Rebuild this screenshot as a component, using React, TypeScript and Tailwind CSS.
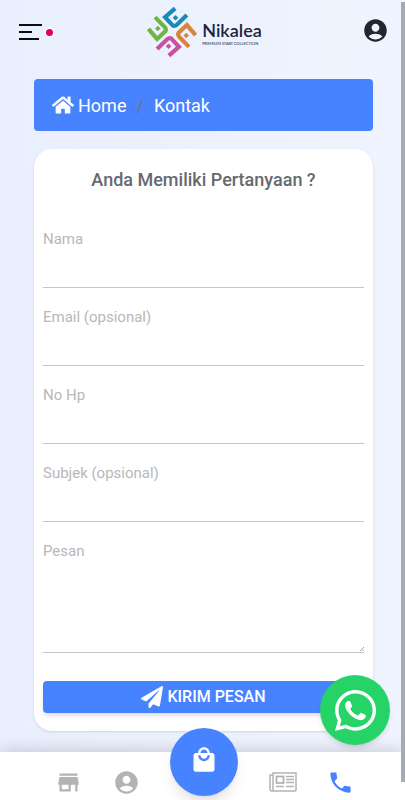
import { FaHome, FaPaperPlane, FaWhatsapp } from "react-icons/fa";
import { MdAccountCircle, MdLocalMall, MdPhone } from "react-icons/md";

const fields = [
  { id: "nama", label: "Nama", type: "text" },
  { id: "email", label: "Email (opsional)", type: "email" },
  { id: "nohp", label: "No Hp", type: "tel" },
  { id: "subjek", label: "Subjek (opsional)", type: "text" },
];

const petals = [
  { color: "#1a8bb8", turn: "rotate(0)" },
  { color: "#d9843b", turn: "rotate(90)" },
  { color: "#c9509f", turn: "rotate(180)" },
  { color: "#6fb544", turn: "rotate(270)" },
];

function Logo() {
  return (
    <a href="#" className="flex items-center gap-1">
      <svg viewBox="-75 -75 150 150" className="size-[52px]">
        {petals.map((p) => (
          <g key={p.color} transform={p.turn}>
            <path d="M9 -68 L-20 -43 L1 -20 Q7 -15 14 -21 L43 -49" fill="none" stroke={p.color} strokeWidth="12" />
            <path d="M10 -49 L18 -41 L10 -33 L2 -41 Z" fill={p.color} />
          </g>
        ))}
      </svg>
      <span className="flex flex-col text-[#1c2440]">
        <span className="font-['Lato'] text-[18px] leading-[22px] font-semibold">Nikalea</span>
        <span className="font-['Lato'] text-[4px] leading-[5px]">PREMIUM SYARI COLLECTION</span>
      </span>
    </a>
  );
}

function StoreIcon() {
  return (
    <svg viewBox="0 0 24 24" fill="currentColor" className="size-[27px]">
      <path d="M20 4H4v2h16V4zm1 10v-2l-1-5H4l-1 5v2h1v6h10v-6h4v6h2v-6h1zm-9 4H6v-4h6v4z" />
    </svg>
  );
}

function NewsIcon() {
  return (
    <svg viewBox="0 0 28 20" fill="none" stroke="currentColor" strokeWidth="1.5" className="mb-1 h-5 w-7">
      <path d="M4 1H27V18Q27 19 26 19H3Q4 19 4 17.500V1ZM4 3H1V17.500Q1 19 2.500 19H3" />
      <rect x="7.500" y="4.500" width="7" height="6.500" strokeWidth="1.8" />
      <path d="M17 4.500H25M17 7.500H25M17 10.500H25M17 14.500H25M7 14.500H15" />
    </svg>
  );
}

export default function App() {
  return (
    <div className="min-h-screen bg-linear-to-r from-[#e9effd] to-[#f0f4ff] pb-[69px] font-['Roboto',sans-serif]">
      <header className="flex h-16 items-center justify-between pr-4 pl-[19px]">
        <button type="button" aria-label="Menu" className="flex w-[35px] items-center gap-1">
          <svg viewBox="0 0 23 18" className="h-[18px] w-[23px]" fill="none" stroke="#0b0d14" strokeWidth="2">
            <path d="M0 2H23M0 9H13M0 16H20" />
          </svg>
          <span className="size-[7px] shrink-0 rounded-full bg-[#e6005c] ring-2 ring-white/60" />
        </button>
        <Logo />
        <a href="#" aria-label="Akun" className="flex w-[35px] justify-end pb-1">
          <MdAccountCircle className="size-[27px] shrink-0 text-[#22272e]" />
        </a>
      </header>

      <main className="mt-[15px] pr-8 pl-[34px]">
        <nav className="flex h-[52px] items-center rounded bg-[#4883ff] px-[18px] text-[18px] text-white">
          <a href="#" className="flex items-center gap-1">
            <FaHome className="size-[22px]" />
            Home
          </a>
          <span className="px-2.5 text-[#6c757d]">/</span>
          <a href="#">Kontak</a>
        </nav>

        <form className="mt-[18px] rounded-[18px] bg-white px-[9px] py-[18px] shadow-sm">
          <h1 className="text-center text-[18px] leading-[26px] font-medium text-[#666a6e]">Anda Memiliki Pertanyaan ?</h1>
          <div className="mt-[17px]">
            {fields.map((f) => (
              <div key={f.id} className="flex h-[78px] flex-col pt-[19px]">
                <label htmlFor={f.id} className="text-[15px] leading-5 text-[#b8b8b8]">
                  {f.label}
                </label>
                <input id={f.id} type={f.type} className="min-h-0 flex-1 border-b border-[#c4c4c4] outline-none" />
              </div>
            ))}
            <div className="relative flex flex-col pt-[19px]">
              <label htmlFor="pesan" className="text-[15px] leading-5 text-[#b8b8b8]">
                Pesan
              </label>
              <textarea id="pesan" className="h-[92px] resize-none border-b border-[#c4c4c4] outline-none" />
              <svg viewBox="0 0 4 4" className="absolute right-0 bottom-0.5 size-1" stroke="#888" strokeWidth="0.8">
                <path d="M0 4L4 0M2.500 4L4 2.500" />
              </svg>
            </div>
          </div>
          <button
            type="submit"
            className="mt-7 flex h-8 w-full items-center justify-center gap-1 rounded-sm bg-[#4883ff] text-base font-medium text-white shadow-md"
          >
            <FaPaperPlane className="size-[22px]" />
            KIRIM PESAN
          </button>
        </form>
      </main>

      <a
        href="#"
        aria-label="WhatsApp"
        className="fixed right-[15px] bottom-[55px] z-20 flex size-[70px] items-center justify-center rounded-full bg-[#25d366] text-white shadow-md"
      >
        <FaWhatsapp className="size-[47px]" />
      </a>

      <nav className="fixed inset-x-0 bottom-0 z-10 flex h-12 items-end justify-between bg-white pr-[51px] pb-1 pl-[55px] text-[#b3b3b3] shadow-[0_0_18px_rgba(0,0,0,0.2)]">
        <a href="#" aria-label="Toko">
          <StoreIcon />
        </a>
        <a href="#" aria-label="Akun">
          <MdAccountCircle className="size-[27px]" />
        </a>
        <a
          href="#"
          aria-label="Belanja"
          className="flex size-[68px] items-center justify-center rounded-full bg-[#4883ff] pb-1 text-white shadow-lg"
        >
          <MdLocalMall className="size-7" />
        </a>
        <a href="#" aria-label="Berita">
          <NewsIcon />
        </a>
        <a href="#" aria-label="Kontak" className="text-[#4883ff]">
          <MdPhone className="size-[27px]" />
        </a>
      </nav>

      <div className="fixed top-0.5 right-0 z-30 h-[780px] w-1 bg-[#a6aab5]" />
    </div>
  );
}
